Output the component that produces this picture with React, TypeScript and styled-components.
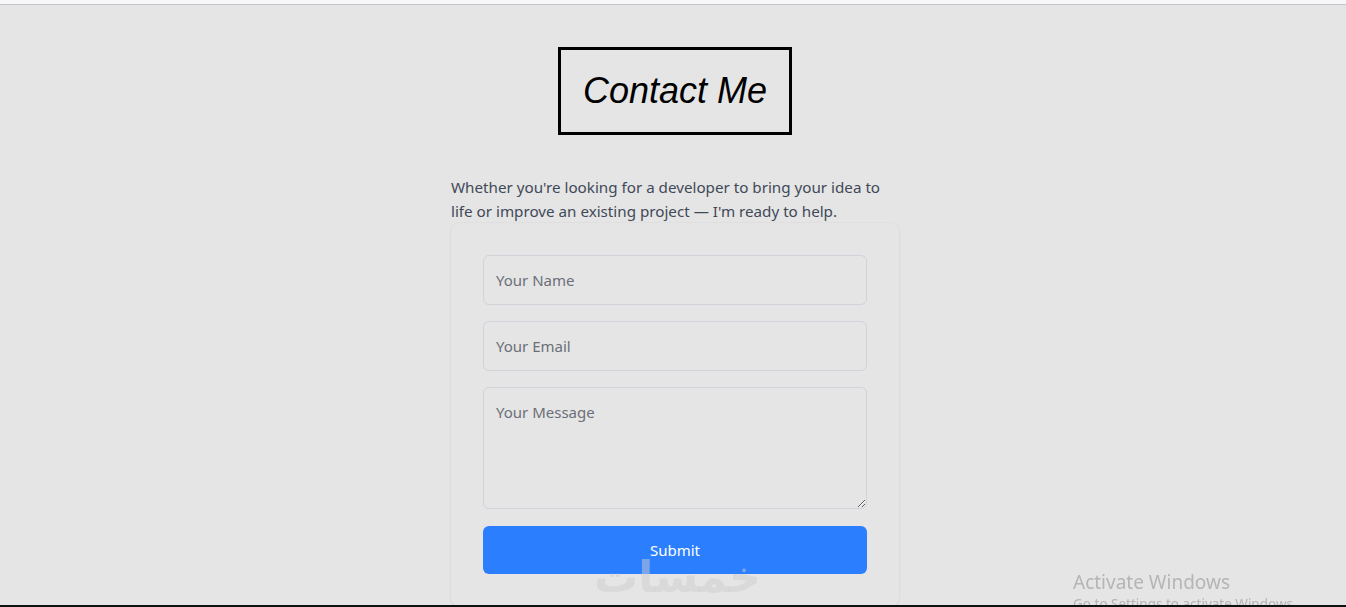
import React from "react";
import styled, { createGlobalStyle } from "styled-components";

const Global = createGlobalStyle`
  html, body { margin: 0; padding: 0; background: #e5e5e5; }
  body { font-family: "Noto Sans", "Open Sans", sans-serif; overflow: hidden; }
  * { box-sizing: border-box; }
`;

const Page = styled.div`
  min-height: 607px;
  display: flex;
  flex-direction: column;
  background: #e5e5e5;
`;

const BrowserEdge = styled.div`
  height: 5px;
  background: #f7f7f9;
  border-bottom: 1px solid #c6c6c8;
`;

const Main = styled.main`
  display: flex;
  flex-direction: column;
  align-items: center;
  padding: 42px 0 0 4px;
`;

const TitleBox = styled.h1`
  margin: 0 0 40px;
  border: 3px solid #000;
  padding: 21px 22px;
  font-family: "Liberation Sans", Arial, sans-serif;
  font-style: italic;
  font-weight: 400;
  font-size: 36px;
  line-height: 40px;
  color: #000;
`;

const Intro = styled.p`
  margin: 0;
  width: 448px;
  font-size: 15.2px;
  line-height: 24px;
  color: #414958;
`;

const Card = styled.form`
  width: 448px;
  padding: 32px;
  display: flex;
  flex-direction: column;
  gap: 16px;
  border-radius: 8px;
  background: #e5e5e5;
  box-shadow: 0 0 0 1px rgba(0, 0, 0, 0.015), 0 1px 3px rgba(0, 0, 0, 0.06);
`;

const fieldCss = `
  width: 100%;
  border: 1px solid #d0d3da;
  border-radius: 6px;
  background: transparent;
  padding: 12px;
  font-family: "Noto Sans", "Open Sans", sans-serif;
  font-size: 15px;
  line-height: 24px;
  color: #222;
  outline: none;
  &::placeholder { color: #6b6f78; }
`;

const Input = styled.input`
  ${fieldCss}
  height: 50px;
`;

const TextArea = styled.textarea`
  ${fieldCss}
  height: 122px;
  display: block;
  resize: vertical;
  margin-bottom: 1px;
`;

const SubmitButton = styled.button`
  height: 48px;
  border: none;
  border-radius: 6px;
  background: #2b7fff;
  color: #fff;
  font-family: "Noto Sans", "Open Sans", sans-serif;
  font-size: 15px;
  cursor: pointer;
`;

const Watermark = styled.div`
  position: fixed;
  left: 594px;
  top: 552px;
  font-family: "DejaVu Sans", sans-serif;
  font-size: 44px;
  line-height: 50px;
  font-weight: 700;
  color: rgba(205, 205, 205, 0.5);
  pointer-events: none;
  direction: rtl;
`;

const ActivateNotice = styled.div`
  position: fixed;
  left: 1073px;
  top: 570px;
  font-family: "Noto Sans", "Open Sans", sans-serif;
  color: #b5b5b5;
  pointer-events: none;
`;

const NoticeTitle = styled.div`
  font-size: 19px;
  line-height: 25px;
`;

const NoticeSub = styled.div`
  font-size: 13.5px;
  line-height: 18px;
`;

const ScreenEdge = styled.div`
  position: fixed;
  left: 0;
  right: 0;
  bottom: 0;
  height: 2px;
  background: #111;
`;

export default function App() {
  return (
    <>
      <Global />
      <Page>
        <BrowserEdge />
        <Main>
          <TitleBox>Contact Me</TitleBox>
          <Intro>
            Whether you're looking for a developer to bring your idea to life or improve an
            existing project — I'm ready to help.
          </Intro>
          <Card onSubmit={(e) => e.preventDefault()}>
            <Input type="text" placeholder="Your Name" />
            <Input type="email" placeholder="Your Email" />
            <TextArea placeholder="Your Message" />
            <SubmitButton type="submit">Submit</SubmitButton>
          </Card>
        </Main>
      </Page>
      <Watermark>خمسات</Watermark>
      <ActivateNotice>
        <NoticeTitle>Activate Windows</NoticeTitle>
        <NoticeSub>Go to Settings to activate Windows.</NoticeSub>
      </ActivateNotice>
      <ScreenEdge />
    </>
  );
}
